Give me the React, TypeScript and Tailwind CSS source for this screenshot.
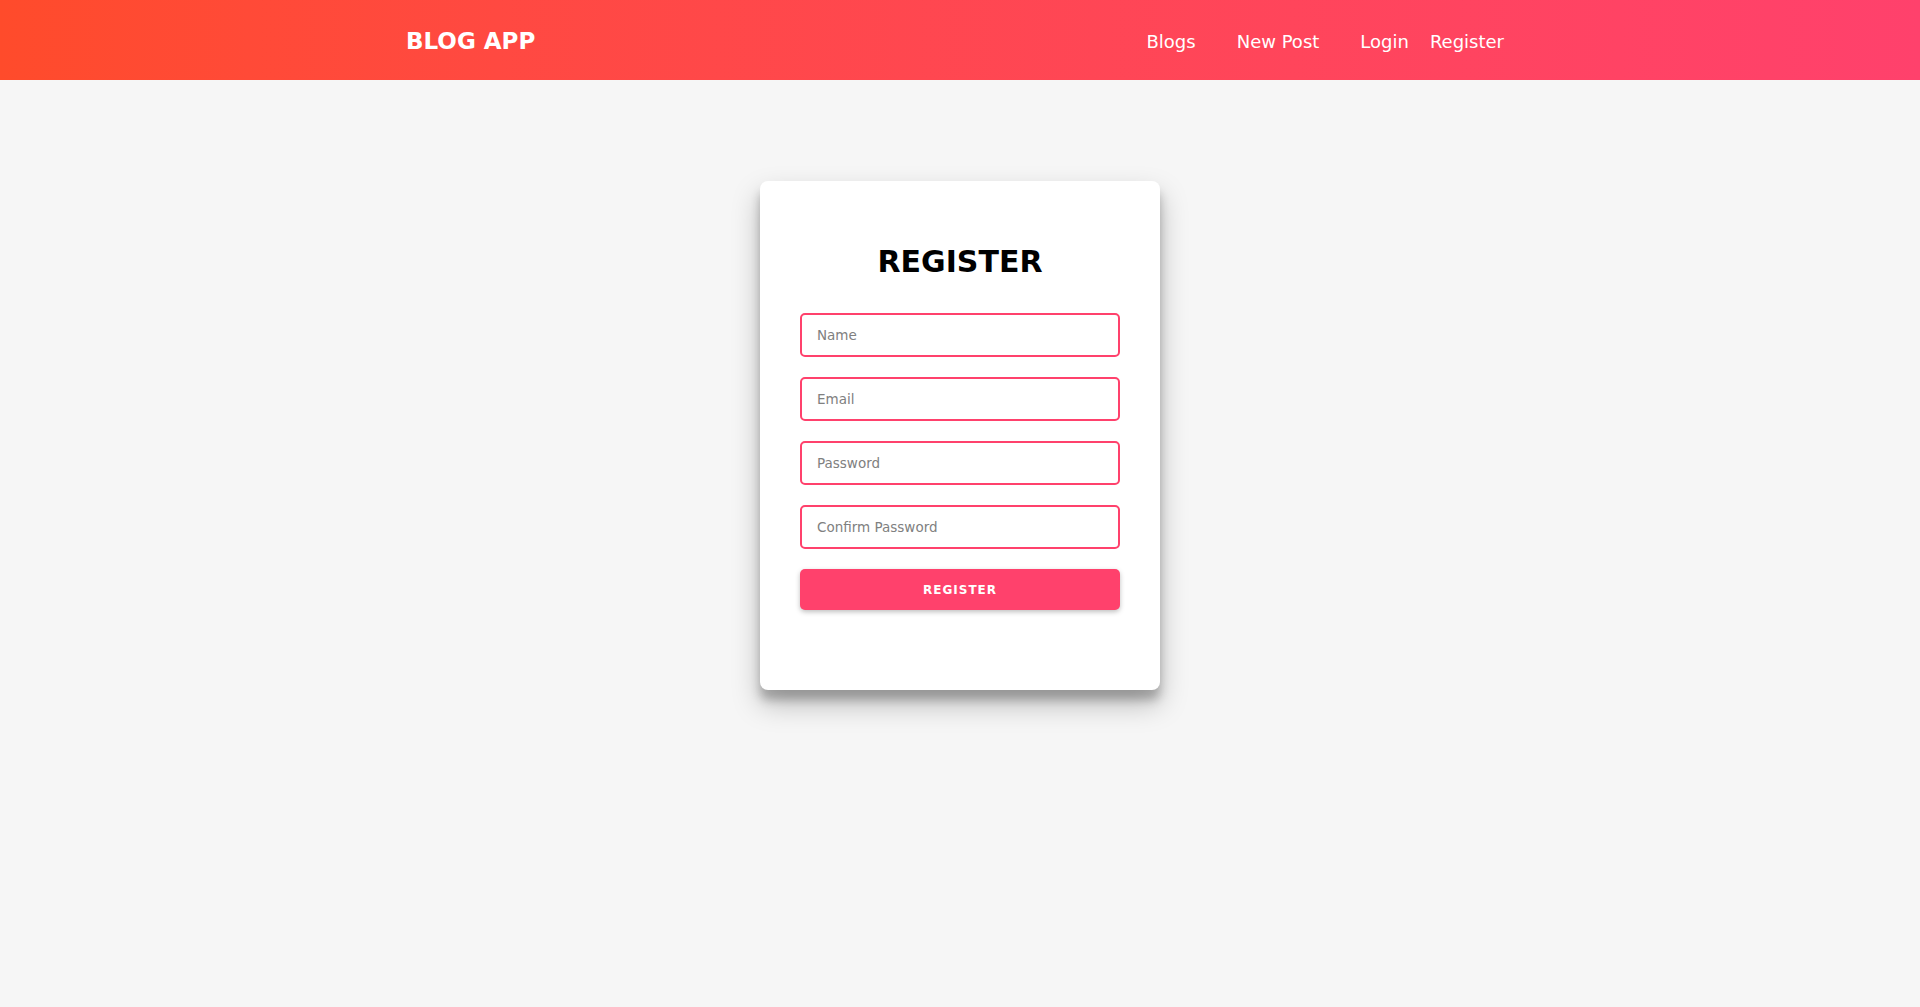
import React from "react";

const font = { fontFamily: '"DejaVu Sans", "Open Sans", sans-serif' };

export default function App() {
  return (
    <div className="min-h-[1007px] bg-[#f6f6f6]" style={font}>
      <header className="h-20 bg-gradient-to-r from-[#ff4b2b] to-[#ff416c]">
        <div className="mx-auto flex h-full w-[1110px] items-center justify-between pl-[1px] pr-[11px] pt-[2px]">
          <div className="text-[23px] font-bold text-white">BLOG APP</div>
          <nav className="flex items-center text-[18px] text-white">
            <a className="mr-[41px]">Blogs</a>
            <a className="mr-[41px]">New Post</a>
            <a className="mr-[21px]">Login</a>
            <a>Register</a>
          </nav>
        </div>
      </header>
      <main className="flex justify-center pt-[101px]">
        <div className="w-[400px] rounded-lg bg-white px-10 pb-20 pt-[61px] shadow-[0_14px_28px_rgba(0,0,0,0.25),0_10px_10px_rgba(0,0,0,0.22)]">
          <h1 className="mb-[31px] text-center text-[30px] font-bold leading-[40px] text-black">REGISTER</h1>
          <form className="flex flex-col gap-5">
            {["Name", "Email", "Password", "Confirm Password"].map((p) => (
              <input
                key={p}
                placeholder={p}
                className="h-11 w-full rounded-[5px] border-2 border-[#ff416c] bg-white px-[15px] text-[13.5px] text-[#333] outline-none placeholder:text-[#808080]"
              />
            ))}
            <button
              type="button"
              className="h-[41px] w-full rounded-[5px] bg-[#ff416c] text-[12px] font-bold tracking-[1px] text-white shadow-[0_2px_5px_rgba(0,0,0,0.25)]"
            >
              REGISTER
            </button>
          </form>
        </div>
      </main>
    </div>
  );
}
